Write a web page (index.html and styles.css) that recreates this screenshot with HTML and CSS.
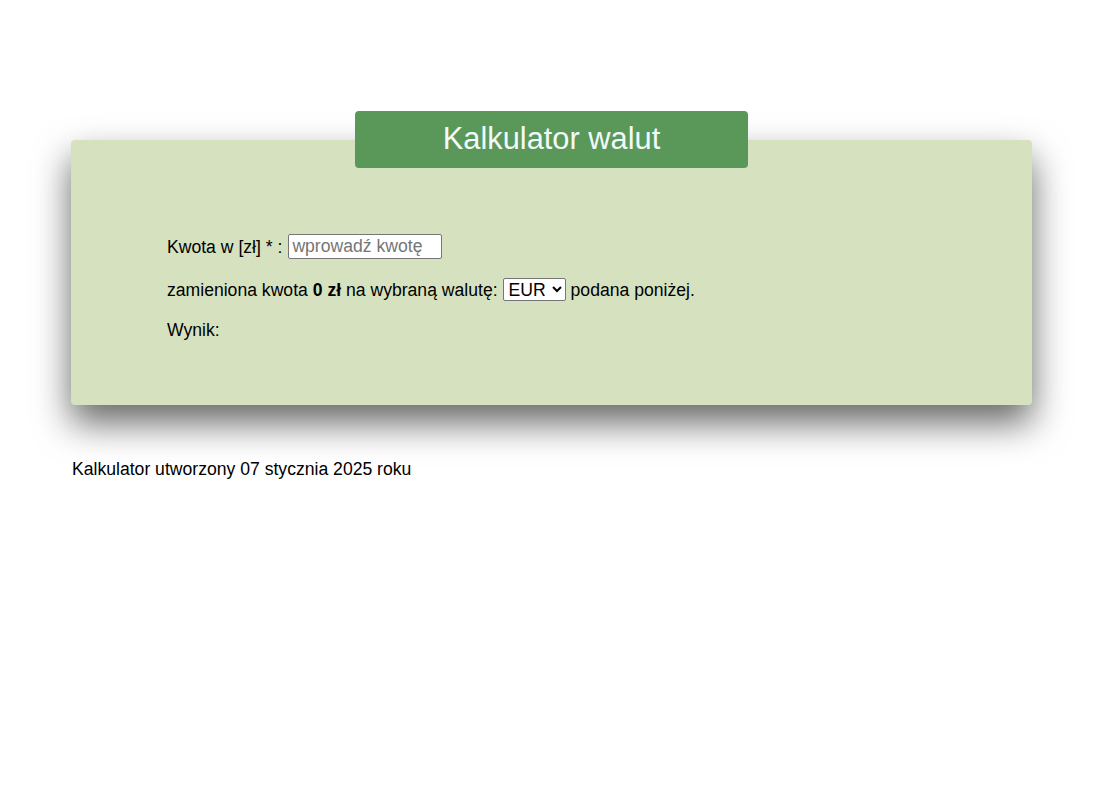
FILE: index.html
```html
<!DOCTYPE html>
<html lang="pl">
<head>
<meta charset="utf-8">
<title>Kalkulator walut</title>
<link rel="stylesheet" href="styles.css">
</head>
<body>
<main class="page">
  <section class="panel">
    <h1 class="title">Kalkulator walut</h1>
    <form class="form">
      <div class="row">
        <label for="kwota">Kwota w [zł] * :</label>
        <input id="kwota" class="amount" type="text" placeholder="wprowadź kwotę">
      </div>
      <div class="row">
        <span>zamieniona kwota <b>0 zł</b> na wybraną walutę:</span>
        <select class="currency">
          <option>EUR</option>
          <option>USD</option>
          <option>GBP</option>
        </select>
        <span>podana poniżej.</span>
      </div>
      <div class="row result">Wynik:</div>
    </form>
  </section>
  <footer class="footer">Kalkulator utworzony 07 stycznia 2025 roku</footer>
</main>
</body>
</html>
```
FILE: styles.css
```css
html, body {
  margin: 0;
  padding: 0;
  background: #ffffff;
}
body {
  font-family: "Liberation Sans", Arial, sans-serif;
  font-size: 17.6px;
  color: #000;
}
.page {
  padding: 140px 0 0 71px;
}
.panel {
  width: 961px;
  height: 265px;
  box-sizing: border-box;
  background: #d6e2bf;
  border-radius: 4px;
  box-shadow: 0 18px 36px rgba(0, 0, 0, 0.6);
  padding: 0 96px;
  display: flex;
  flex-direction: column;
}
.title {
  box-sizing: border-box;
  width: 393px;
  height: 57px;
  margin: -29px auto 0;
  background: #599858;
  color: #f2f8fb;
  border-radius: 4px;
  font-weight: normal;
  font-size: 30.8px;
  display: flex;
  align-items: center;
  justify-content: center;
  padding-bottom: 1px;
}
.form {
  margin-top: 66px;
  display: flex;
  flex-direction: column;
}
.row {
  display: flex;
  align-items: center;
  gap: 5px;
  line-height: 20px;
}
.row:first-child {
  gap: 6px;
}
.row + .row {
  margin-top: 19px;
}
.result {
  margin-top: 20px;
}
.amount {
  box-sizing: border-box;
  width: 154px;
  height: 25px;
  margin: 0;
  padding: 1px 3px;
  border: 1px solid #767676;
  border-radius: 2px;
  font-family: "Liberation Sans", Arial, sans-serif;
  font-size: 17.6px;
  background: #fff;
}
.amount::placeholder {
  color: #757575;
}
.currency {
  box-sizing: border-box;
  width: 63px;
  height: 23px;
  margin: 0;
  padding: 0 0 0 1px;
  font-family: "Liberation Sans", Arial, sans-serif;
  font-size: 17.6px;
  border: 1px solid #767676;
  border-radius: 2px;
  background: #fff;
  color: #000;
}
.footer {
  margin-top: 54px;
  line-height: 20px;
  padding-left: 1px;
}
```
